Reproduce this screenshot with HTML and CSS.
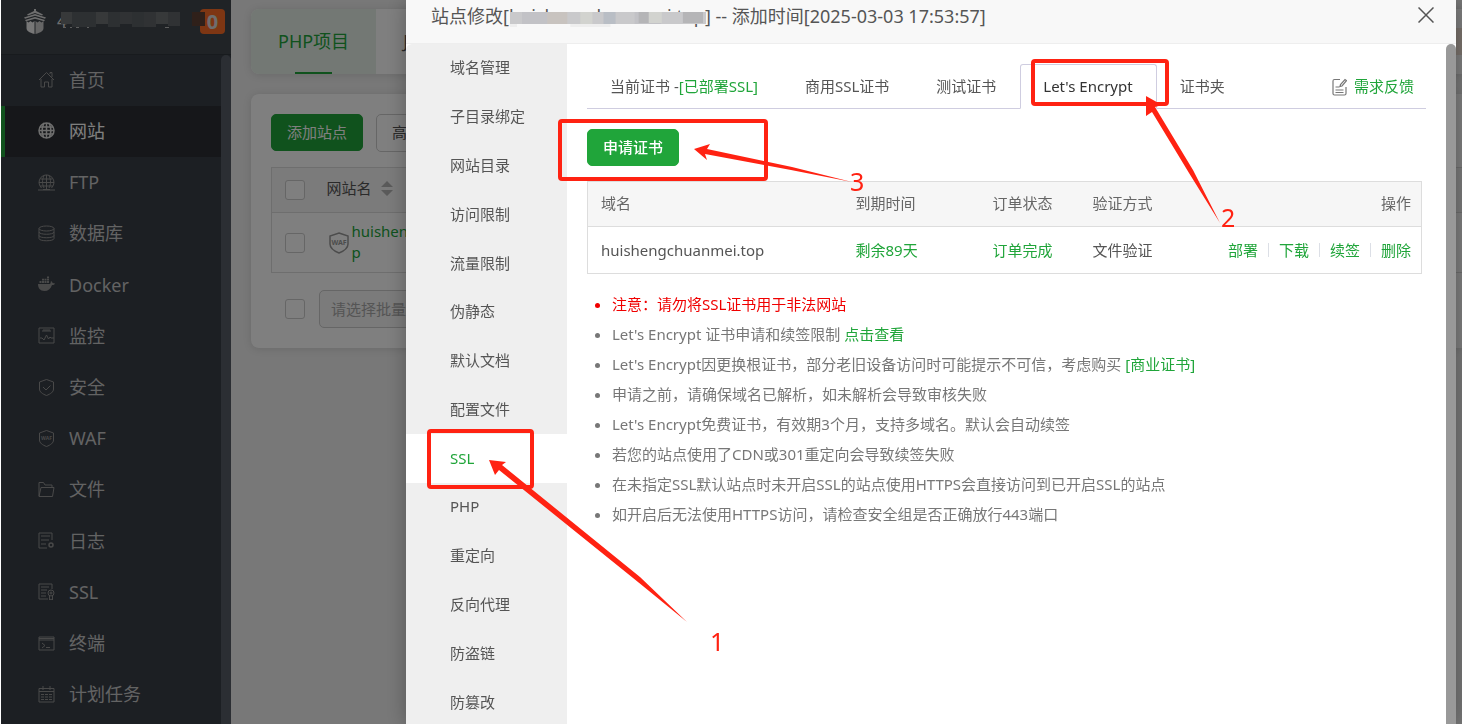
FILE: index.html
```html
<!DOCTYPE html>
<html lang="zh-CN">
<head>
<meta charset="utf-8">
<title>网站 - 站点修改</title>
<link rel="stylesheet" href="styles.css">
</head>
<body>
<div class="app">
  <aside class="sidebar">
    <header class="brand">
      <svg class="brand-logo" viewBox="0 0 24 26" width="24" height="26" fill="#ddd">
        <path d="M11 0h2v2l7 3.500-1 1-7-2.500-7 2.500-1-1L11 2z"/>
        <path d="M12 5l11 3.500-1 1.200-10-3-10 3-1-1.200z"/>
        <path d="M12 8l10 3-1 1.200-9-2.500-9 2.500L2 11z"/>
        <path d="M3.500 12l2 1.500 2-1.500 2 1.500 2-1.500v13C6 23.500 3.500 22 3.500 19z" fill="#eee"/>
        <path d="M12.500 12l2 1.500 2-1.500 2 1.500 2-1.500v7c0 3-2.500 4.500-8 6z" fill="#ccc"/>
      </svg>
      <span class="brand-name">4</span>
      <svg class="mask brand-mask" viewBox="0 0 144 17" width="144" height="17" aria-hidden="true">
        <path fill="#6e7274" d="M0 0h11v12H0zM35 0h12v12H35zM95 0h12v12H95z"/>
        <path fill="#5a6064" d="M11 0h12v15H11zM23 0h12v15H23zM47 0h12v15H47zM71 0h12v15H71z"/>
        <path fill="#606468" d="M59 0h12v12H59zM83 0h12v15H83zM107 0h12v14h-12z"/>
        <path fill="#5e4034" d="M131 0h13v14h-13z"/>
        <path fill="#bbb" d="M2 15h3v1H2zM9 15h2v1H9zM15 15h3v1h-3zM26 15h2v1h-2zM104 15h4v1h-4z"/>
      </svg>
      <span class="badge">0</span>
    </header>
    <div class="nav-area">
      <nav class="nav">
        <a href="#"><svg viewBox="0 0 17 17"><path d="M1 9l7.500-7.500L16 9M3 8v8h3.500v-5h4v5H14V8M12 3V1.500h2V6"/></svg>首页</a>
        <a href="#" class="on"><svg viewBox="0 0 17 17"><circle cx="8.500" cy="8.500" r="7.500" fill="#2b2e33" stroke="#ddd" stroke-width="1.500"/><path stroke="#ddd" stroke-width="1.500" d="M8.500 1v15M1 8.500h15M2 5h13M2 12h13M6 1c-2.500 5-2.500 10 0 15M11 1c2.500 5 2.500 10 0 15"/></svg>网站</a>
        <a href="#"><svg viewBox="0 0 17 17"><path d="M3.500 14a7.500 7.500 0 1 1 10 0M8.500 1v14M1 8.500h15M2.500 5h12M2 12h13M6 1.500C4 6 4 10 6 14M11 1.500c2 4.500 2 8.500 0 12.500M0 16h17M5 15.500h7"/></svg>FTP</a>
        <a href="#"><svg viewBox="0 0 17 17"><ellipse cx="8.500" cy="3.500" rx="7.500" ry="2.500"/><path d="M1 3.500v10c0 3 15 3 15 0v-10M1 7c0 3 15 3 15 0M1 10.500c0 3 15 3 15 0"/></svg>数据库</a>
        <a href="#"><svg viewBox="0 0 17 17"><path fill="#929292" stroke="none" d="M0 8h12c1-1 .5-2 1-3 1 .5 1.500 1.200 1.500 2 1 0 2 .2 2.500.5-.5 1.200-1.500 1.500-3 1.500-1.500 4-4 6-7.500 6C2 15 0 12 0 8zM1.500 5h2v2h-2zM4 5h2v2H4zM6.500 5h2v2h-2zM9 5h2v2H9zM4 2.800h2v1.700H4zM6.500 2.800h2v1.700h-2zM9 2.800h2v1.700H9zM9 .5h2v1.700H9z"/></svg>Docker</a>
        <a href="#"><svg viewBox="0 0 17 17"><path d="M1 1h15v15H1zM4 4h9M5 3h7M2 11h2l2 2 2.500-5 2 4 1.500-2 1 1h3"/></svg>监控</a>
        <a href="#"><svg viewBox="0 0 17 17"><path d="M8.500.5L15.500 3v7c0 3-3 5-7 6.500C4.500 15 1.500 13 1.500 10V3zM5 8l3 3 4.500-4.500"/></svg>安全</a>
        <a href="#"><svg viewBox="0 0 17 17"><path d="M8.500.5L15.500 3v7c0 3-3 5-7 6.500C4.500 15 1.500 13 1.500 10V3z"/><text x="8.500" y="10" class="tiny">WAF</text></svg>WAF</a>
        <a href="#"><svg viewBox="0 0 17 17"><path d="M1 15V1.500h4.500L7 4h7v2M1 15.500h13.500l1.500-9H3z"/></svg>文件</a>
        <a href="#"><svg viewBox="0 0 17 17"><path d="M14 8V1H1v15h8M3 4h9M3 8h8M3 12h5"/><circle cx="13" cy="13" r="2" stroke-width="1.500"/></svg>日志</a>
        <a href="#"><svg viewBox="0 0 17 17"><path d="M14 6V1H1v15h9M3 4h8M3 7h6M3 10h5M3 13h5"/><circle cx="13" cy="10" r="3"/><circle cx="13" cy="10" r="1"/><path d="M11.500 13v4l1.500-1 1.500 1v-4"/></svg>SSL</a>
        <a href="#"><svg viewBox="0 0 17 17"><path d="M1 2h15v13H1zM1 3.500h15M1 5h15M4 8l3 2.500L4 13M8 12.500h4"/></svg>终端</a>
        <a href="#"><svg viewBox="0 0 17 17"><path d="M1 2.500h15V16H1zM1 5.500h15M5 0v4M12 0v4M3 8.500h3M7 8.500h3M11 8.500h3M3 11h3M7 11h3M11 11h3M3 13.500h3M7 13.500h3M11 13.500h3"/></svg>计划任务</a>
      </nav>
      <div class="nav-scroll"></div>
    </div>
  </aside>

  <main class="page">
    <section class="card project-tabs">
      <a href="#" class="project on">PHP项目</a>
      <a href="#" class="project">Java项目</a>
      <span class="promo"></span>
    </section>
    <section class="card sites">
      <div class="toolbar">
        <button class="btn primary" type="button">添加站点</button>
        <button class="btn plain" type="button">高级设置</button>
      </div>
      <table class="site-table">
        <thead>
          <tr><th class="pick"><input type="checkbox" aria-label="全选"></th><th><span class="sortable">网站名
            <svg viewBox="0 0 12 15" width="12" height="15" fill="#b5b5b5"><path d="M0 6l6-6 6 6zM0 9h12l-6 6z"/></svg></span></th></tr>
        </thead>
        <tbody>
          <tr><td class="pick"><input type="checkbox" aria-label="选择站点"></td><td><div class="site">
            <svg viewBox="0 0 20 22" width="20" height="22" fill="none" stroke="#999" stroke-width="1.500"><path d="M10 1l9 3v8c0 4-4 7-9 9-5-2-9-5-9-9V4z"/><text x="10" y="13" class="shield-text">WAF</text></svg>
            <a href="#">huishengchuanmei.top</a></div></td></tr>
        </tbody>
      </table>
      <div class="batch">
        <input type="checkbox" aria-label="批量选择">
        <select aria-label="批量操作"><option>请选择批量操作</option></select>
      </div>
    </section>
  </main>
</div>

<div class="shade"></div>

<div class="dialog" role="dialog" aria-label="站点修改">
  <header class="dialog-head">
    <h1>站点修改[<span class="masked">huishengchuanmei.top<svg class="mask" viewBox="0 0 195 15" preserveAspectRatio="none" aria-hidden="true">
      <path fill="#c9c9cb" d="M0 0h195v12H0z"/>
      <path fill="#c2c2c6" d="M12 0h25v12H12zM124 0h26v12h-26z"/>
      <path fill="#c8c3bf" d="M37 0h20v12H37z"/>
      <path fill="#d2d3cf" d="M70 0h12v12H70zM137 0h14v11h-14z"/>
      <path fill="#b9bec5" d="M93 0h12v12H93z"/>
      <path fill="#b5b5b7" d="M128 0h10v11h-10zM172 0h20v11h-20z"/>
      <path fill="#eee" d="M0 12h7v3H0zM60 12h40v3H60z"/>
    </svg></span>] -- 添加时间[2025-03-03 17:53:57]</h1>
    <button class="close" type="button" aria-label="关闭"><svg viewBox="0 0 16 16" width="16" height="16" stroke="#555" stroke-width="1.500" fill="none"><path d="M.5.5l15 15M15.500.5l-15 15"/></svg></button>
  </header>
  <div class="dialog-body">
    <nav class="menu">
      <a href="#">域名管理</a>
      <a href="#">子目录绑定</a>
      <a href="#">网站目录</a>
      <a href="#">访问限制</a>
      <a href="#">流量限制</a>
      <a href="#">伪静态</a>
      <a href="#">默认文档</a>
      <a href="#">配置文件</a>
      <a href="#" class="on">SSL</a>
      <a href="#">PHP</a>
      <a href="#">重定向</a>
      <a href="#">反向代理</a>
      <a href="#">防盗链</a>
      <a href="#">防篡改</a>
    </nav>
    <div class="content">
      <div class="tabs">
        <a href="#">当前证书 -<span class="green">[已部署SSL]</span></a>
        <a href="#">商用SSL证书</a>
        <a href="#">测试证书</a>
        <a href="#" class="on">Let's Encrypt</a>
        <a href="#">证书夹</a>
        <a href="#" class="feedback"><svg viewBox="0 0 15 18" width="15" height="18" fill="none" stroke="#777" stroke-width="1.200"><path d="M8 1.500H2.500Q1 1.500 1 3v12.500Q1 17 2.500 17h10q1.500 0 1.500-1.500V9M3.500 9h4M3.500 12h8M3.500 14.500h8M8 8.500l.5-2L13 1.500l1.500 1.200L10 8z"/></svg>需求反馈</a>
      </div>
      <button class="btn primary apply" type="button">申请证书</button>
      <table class="certs">
        <thead>
          <tr><th class="c-domain">域名</th><th class="c-expiry">到期时间</th><th class="c-state">订单状态</th><th class="c-method">验证方式</th><th class="c-ops">操作</th></tr>
        </thead>
        <tbody>
          <tr><td>huishengchuanmei.top</td><td class="green">剩余89天</td><td class="green">订单完成</td><td>文件验证</td>
            <td class="c-ops"><div class="ops"><a href="#">部署</a><a href="#">下载</a><a href="#">续签</a><a href="#">删除</a></div></td></tr>
        </tbody>
      </table>
      <ul class="notes">
        <li class="warn">注意：请勿将SSL证书用于非法网站</li>
        <li>Let's Encrypt 证书申请和续签限制 <a href="#">点击查看</a></li>
        <li>Let's Encrypt因更换根证书，部分老旧设备访问时可能提示不可信，考虑购买 <a href="#">[商业证书]</a></li>
        <li>申请之前，请确保域名已解析，如未解析会导致审核失败</li>
        <li>Let's Encrypt免费证书，有效期3个月，支持多域名。默认会自动续签</li>
        <li>若您的站点使用了CDN或301重定向会导致续签失败</li>
        <li>在未指定SSL默认站点时未开启SSL的站点使用HTTPS会直接访问到已开启SSL的站点</li>
        <li>如开启后无法使用HTTPS访问，请检查安全组是否正确放行443端口</li>
      </ul>
    </div>
    <div class="dialog-scroll"></div>
  </div>
</div>

<svg class="marks" viewBox="0 0 1462 724" width="1462" height="724" aria-hidden="true">
  <g fill="none" stroke="#ff2212" stroke-width="4">
    <rect x="429" y="431" width="103" height="56" rx="2"/>
    <rect x="560" y="121" width="206" height="58" rx="2"/>
    <rect x="1033" y="61" width="134" height="43" rx="2"/>
  </g>
  <g fill="#ff2212">
    <path d="M489 460l17 2-4 3L640 577l47 45-49-40L499 470l-4 5z"/>
    <path d="M694 149l16-5-3 5 85 18 60 15-61-12-86-16 2 6z"/>
    <path d="M1146 96l16 9-7 2 38 63 27 53-31-50-37-61-6 4z"/>
    <text x="710" y="651">1</text>
    <text x="1221" y="227">2</text>
    <text x="850" y="191">3</text>
  </g>
</svg>
</body>
</html>
```
FILE: styles.css
```css
* { box-sizing: border-box; }

body {
  margin: 0;
  height: 100vh;
  overflow: hidden;
  font: 15px/20px "Noto Sans", "Noto Sans CJK SC", sans-serif;
  font-weight: 400;
  color: #666;
}

a { color: #20a53a; text-decoration: none; }
button, select { font: inherit; }
.green { color: #20a53a; }

/* Application shell */
.app { display: flex; height: 100vh; border-left: 1px solid #fff; }

.sidebar {
  width: 230px;
  flex: none;
  display: flex;
  flex-direction: column;
  background: #383e46;
}

.brand {
  height: 55px;
  padding: 9px 6px 0 22px;
  display: flex;
  align-items: flex-start;
  background: #40464c;
  border-bottom: 1px solid #31363c;
  position: relative;
}
.brand-name { margin-left: 10px; line-height: 24px; font-size: 17px; color: #ddd; }
.brand-mask { position: absolute; left: 60px; top: 12px; }
.badge {
  margin-left: auto;
  width: 25px;
  height: 25px;
  border-radius: 4px;
  background: #fc6d26;
  color: #ddd;
  font-size: 20px;
  font-weight: 700;
  line-height: 25px;
  text-align: center;
}

.nav-area { flex: 1; display: flex; min-height: 0; }
.nav { flex: 1; display: flex; flex-direction: column; padding-bottom: 3px; }
.nav a {
  flex: 1;
  display: flex;
  align-items: center;
  gap: 14px;
  padding: 0 0 2px 33px;
  border-left: 4px solid transparent;
  font-size: 18px;
  color: #c6c6c6;
}
.nav a.on { background: #2c2f34; border-left-color: #20a53a; color: #fff; }
.nav svg { width: 17px; height: 17px; fill: none; stroke: #929292; }
.nav .tiny { font: 700 5px "Noto Sans", sans-serif; text-anchor: middle; fill: #929292; stroke: none; }
.nav-scroll { width: 10px; border-radius: 5px 5px 0 0; background: #565c66; }

.page {
  flex: 1;
  min-width: 0;
  display: flex;
  flex-direction: column;
  gap: 20px;
  padding: 9px 0 0 20px;
  background: #f0f0f0;
}
.card { background: #fff; border-radius: 8px 0 0 8px; box-shadow: 0 1px 8px rgba(0, 0, 0, .12); }

.project-tabs { display: flex; height: 65px; overflow: hidden; }
.project {
  padding: 0 27px;
  line-height: 65px;
  font-size: 18px;
  color: #555;
}
.project.on {
  color: #20a53a;
  background: linear-gradient(#20a53a, #20a53a) center bottom / 37px 2px no-repeat #e6f1e8;
}
.promo { width: 14px; height: 27px; margin: 19px 0 0 auto; background: #f6e6da; }

.sites { padding: 20px 0 20px 20px; }
.toolbar { display: flex; gap: 13px; margin-bottom: 15px; }
.btn { height: 38px; padding: 0 15px 2px; border: 1px solid #ccc; border-radius: 5px; }
.btn.primary { height: 37px; background: #20a53a; border-color: #20a53a; color: #fff; }
.btn.plain { background: #fff; color: #555; }

.site-table { width: 100%; border-collapse: collapse; }
.site-table th, .site-table td { padding: 0; text-align: left; border-top: 1px solid #dcdcdc; border-bottom: 1px solid #dcdcdc; font-weight: 400; color: #555; }
.site-table tr > :first-child { border-left: 1px solid #dcdcdc; }
.site-table th { height: 45px; padding-bottom: 4px; background: #f6f6f6; }
.site-table td { height: 60px; }
.site-table .pick { width: 55px; padding: 0 0 0 13px; }
.sortable { display: flex; align-items: center; gap: 9px; }
.site { display: flex; align-items: center; gap: 3px; margin-left: 2px; }
.site a { width: 158px; font-size: 15px; line-height: 21px; padding-bottom: 2px; word-break: break-all; }
.shield-text { font: 700 7px "Noto Sans", sans-serif; text-anchor: middle; fill: #999; stroke: none; }

input[type="checkbox"] {
  appearance: none;
  display: block;
  width: 20px;
  height: 20px;
  margin: 0;
  border: 1px solid #ccc;
  border-radius: 3px;
  background: #fff;
}
.batch { display: flex; align-items: center; gap: 14px; margin: 17px 0 0 14px; }
.batch select {
  appearance: none;
  width: 160px;
  height: 38px;
  padding: 0 11px;
  border: 1px solid #ccc;
  border-radius: 5px;
  background: #f6f6f6;
  color: #aaa;
}

.shade { position: fixed; inset: 0 0 0 1px; background: rgba(0, 0, 0, .5); }

/* Site settings dialog */
.dialog {
  position: fixed;
  inset: 0 6px 0 406px;
  display: flex;
  flex-direction: column;
  background: #fff;
  box-shadow: 1px 1px 20px rgba(0, 0, 0, .3);
}
.dialog-head {
  height: 44px;
  flex: none;
  display: flex;
  justify-content: space-between;
  align-items: flex-start;
  padding: 5px 22px 0 25px;
  background: #f8f8f8;
  border-bottom: 1px solid #eee;
}
.dialog-head h1 { margin: 0; font-size: 18px; line-height: 22px; font-weight: 400; color: #555; white-space: pre; }
.masked { position: relative; }
.mask { display: block; }
.masked .mask { position: absolute; left: 1px; top: 8px; width: 100%; height: 15px; }
.close { display: flex; margin-top: 2px; padding: 0; border: 0; background: none; }

.dialog-body { flex: 1; display: flex; min-height: 0; }
.menu {
  width: 161px;
  flex: none;
  display: flex;
  flex-direction: column;
  margin-bottom: -3px;
  background: #efefef;
  border-top-left-radius: 6px;
}
.menu a { flex: 1; display: flex; align-items: center; padding: 0 0 2px 44px; color: #555; }
.menu a.on { background: #fff; color: #20a53a; }

.content { flex: 1; min-width: 0; padding: 20px; }
.tabs { display: flex; height: 45px; border-bottom: 1px solid #cfcde0; }
.tabs a {
  height: 45px;
  padding: 0 23px 0 22px;
  border: 1px solid transparent;
  line-height: 43px;
  color: #555;
  white-space: nowrap;
}
.tabs a.on {
  border-color: #cfcde0;
  border-bottom-color: #fff;
  border-radius: 3px 3px 0 0;
  background: #fff;
  color: #333;
}
.tabs .feedback { display: flex; align-items: center; gap: 7px; margin-left: auto; padding: 0 11px; color: #20a53a; }

.btn.apply { display: block; margin: 20px 0 15px; font-weight: 500; }

.certs { width: calc(100% - 4px); border: 1px solid #ddd; border-collapse: collapse; table-layout: fixed; }
.certs th, .certs td { height: 47px; padding: 0 0 0 13px; text-align: left; font-weight: 400; }
.certs th { height: 45px; padding-bottom: 2px; background: #f6f6f6; border-bottom: 1px solid #ddd; }
.certs td { color: #555; }
.certs td.green { color: #20a53a; }
.certs .c-domain { width: 255px; }
.certs .c-expiry { width: 137px; }
.certs .c-state, .certs .c-method { width: 100px; }
.certs .c-ops { padding-left: 0; padding-right: 10px; text-align: right; }
.ops { display: flex; justify-content: flex-end; white-space: nowrap; }
.ops a { line-height: 20px; }
.ops a + a {
  margin-left: 10px;
  padding-left: 11px;
  background: linear-gradient(#dcdfe6, #dcdfe6) left center / 1px 14px no-repeat;
}

.notes { margin: 15px 0 0; padding: 0 0 0 25px; color: #777; line-height: 30px; }
.notes .warn { color: #f00000; }

.dialog-scroll { width: 10px; flex: none; background: #999; border-radius: 5px 5px 0 0; }

/* Step callouts drawn over the page */
.marks { position: fixed; left: 0; top: 0; pointer-events: none; }
.marks text { font: 25px "Noto Sans", sans-serif; }
```
